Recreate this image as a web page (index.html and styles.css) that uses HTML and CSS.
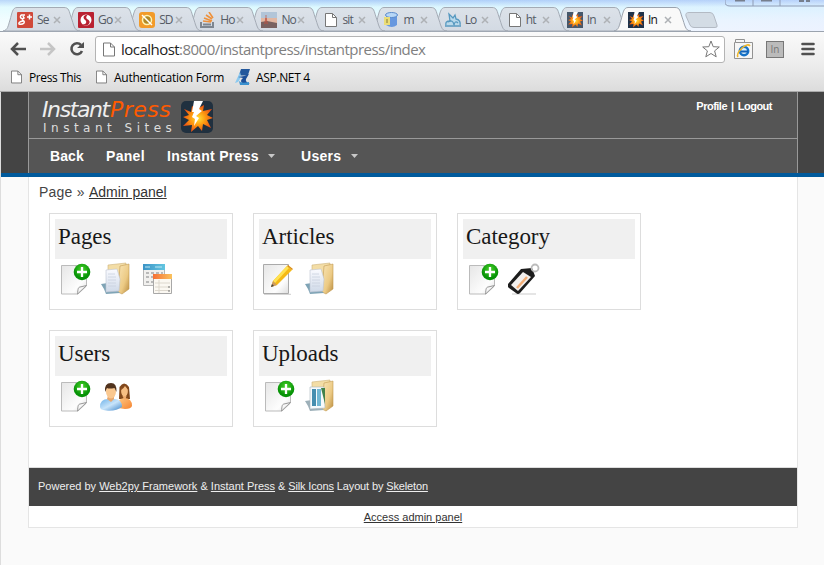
FILE: index.html
```html
<!DOCTYPE html>
<html lang="en">
<head>
<meta charset="utf-8">
<title>Instant Press</title>
<link rel="stylesheet" href="styles.css">
</head>
<body>
<svg class="defs" width="0" height="0" aria-hidden="true">
  <defs>
    <linearGradient id="gTab" x2="0" y2="1"><stop stop-color="#dce2e9"/><stop offset="1" stop-color="#d3dae3"/></linearGradient>
    <linearGradient id="gPaper" x2="1" y2="1"><stop stop-color="#e6e6e6"/><stop offset=".7" stop-color="#fdfdfd"/><stop offset="1" stop-color="#ddd"/></linearGradient>
    <radialGradient id="gGreen" cy=".35"><stop stop-color="#4cd52c"/><stop offset="1" stop-color="#079307"/></radialGradient>
    <linearGradient id="gFolder" x2="1" y2="1"><stop stop-color="#f9e6b8"/><stop offset=".6" stop-color="#ecca84"/><stop offset="1" stop-color="#b98b3e"/></linearGradient>
    <linearGradient id="gDoc" x2="0" y2="1"><stop stop-color="#fafbff"/><stop offset="1" stop-color="#cfd9e8"/></linearGradient>
    <radialGradient id="gFire"><stop stop-color="#ffe23a"/><stop offset=".5" stop-color="#fd9a10"/><stop offset="1" stop-color="#ed5312"/></radialGradient>
    <linearGradient id="gCalBlue" x2="1" y2="0"><stop stop-color="#3c93c6"/><stop offset="1" stop-color="#63c6e1"/></linearGradient>
    <linearGradient id="gCalOrange" x2="1" y2="0"><stop stop-color="#f66f35"/><stop offset="1" stop-color="#fac35e"/></linearGradient>
    <linearGradient id="gBlueShirt" x2="1" y2="1"><stop stop-color="#6eb2e9"/><stop offset=".5" stop-color="#c8e4fa"/><stop offset="1" stop-color="#3f86c9"/></linearGradient>
    <linearGradient id="gOrangeShirt" x2="1" y2="1"><stop stop-color="#ffcb86"/><stop offset="1" stop-color="#f58330"/></linearGradient>
    <symbol id="tab" viewBox="0 0 78 25"><path d="M0 24C5 23 5 19 7 13C9 6 9.500 .5 14 .5H61C66 .5 66 4 68 10C71 18 71 24 77 24Z"/></symbol>
    <symbol id="close" viewBox="0 0 8 8"><path d="M1 1L7 7M7 1L1 7" fill="none" stroke="#aeb1b5" stroke-width="1.500"/></symbol>
    <symbol id="file" viewBox="0 0 12 14"><path d="M.5 .5H7.500L11.500 4.500V13.500H.5Z" fill="#fff" stroke="#777"/><path d="M7.500 .5V4.500H11.500" fill="none" stroke="#777"/></symbol>
    <symbol id="blast" viewBox="0 0 32 32"><path d="M3 8L10 11L11 5L16 8L23 4L22 10L31 8L26 14L32 17L26 19L30 27L22 23L21 30L17 25L10 31L11 24L2 25L8 19L2 16L8 14Z" fill="url(#gFire)"/><path d="M13 0H22L18 8L21 10L15 15L18 17L13 25L14 18L11 16L13 11H11Z" fill="#fff"/></symbol>
    <symbol id="add" viewBox="0 0 32 33"><g transform="translate(1)"><path d="M1.500 3.500H26.500V24L18 32H1.500Z" fill="url(#gPaper)" stroke="#bbb"/><path d="M17.500 32C18 27 18 25.500 20 25L26.500 23.500Z" fill="#f7f7f7" stroke="#999"/><circle cx="22" cy="10" r="8.300" fill="url(#gGreen)"/><path d="M22 5V15M17 10H27" stroke="#fff" stroke-width="2.300"/></g></symbol>
    <symbol id="folder" viewBox="0 0 32 33"><path d="M8 3L26 1V26L8 29Z" fill="#f3dda6" stroke="#cdb27a" stroke-width=".6"/><path d="M20 4L29 2V27L22 32L18 30Z" fill="url(#gFolder)" stroke="#c29a52" stroke-width=".6"/></symbol>
    <symbol id="docs" viewBox="0 0 32 33"><use href="#folder"/><path d="M1 22L8 21L20 31L6 32L4 27Z" fill="#7fa4b6"/><path d="M6 8L17 7L20 17L19 29L6 30Z" fill="url(#gDoc)" stroke="#bec5d1" stroke-width=".6"/><path d="M8 12H15M8 15H16M8 18H16M8 21H16M8 24H16" stroke="#c9d0de" stroke-width=".8"/></symbol>
    <symbol id="photos" viewBox="0 0 32 33"><use href="#folder"/><path d="M1 22L8 21L20 31L6 32L4 27Z" fill="#9db0b9"/><path d="M6 8H20L21 29L6 30Z" fill="#f7fafc" stroke="#aab6bd" stroke-width=".6"/><path d="M8 10H12V27H8Z" fill="#468eaf"/><path d="M13 10H17V27H13Z" fill="#71b7d3"/><path d="M17 9H21V25Z" fill="#42824a"/></symbol>
    <symbol id="calendar" viewBox="0 0 32 33"><path d="M2.500 2.500H23.500V23.500H2.500Z" fill="#f1f0ee" stroke="#b6b6b6"/><path d="M2 2H24V8H2Z" fill="url(#gCalBlue)"/><path d="M4 5H9M14 5H21" stroke="#bde7f3"/><path d="M5 11H22M5 15H22M5 20H22" stroke="#b9b9b9" stroke-width="2" stroke-dasharray="3 2"/><path d="M12.500 12.500H30.500V31.500H12.500Z" fill="#fbf8f2" stroke="#a8a8a8"/><path d="M12 12H31V17H12Z" fill="url(#gCalOrange)"/><path d="M14 21H29M14 25H29M14 28.500H29M18 18V31" stroke="#ddd8ce"/><path d="M28 24V31" stroke="#777" stroke-dasharray="2 2"/></symbol>
    <symbol id="edit" viewBox="0 0 32 33"><path d="M1 32.300H28" stroke="#ccc"/><path d="M.5 2.500H25.500V31.500H.5Z" fill="url(#gPaper)" stroke="#aaa"/><path d="M8 25L10 19L24 4L29 8L14 23Z" fill="#f5b915"/><path d="M10 19L24 4L26 6L12 21Z" fill="#ffe252"/><path d="M8 25L10 19L14 23Z" fill="#ce9c60"/><path d="M8 25L9 22L11 24Z" fill="#444"/><path d="M24 4L25 3L30 7L29 8Z" fill="#dc8e12"/></symbol>
    <symbol id="tag" viewBox="0 0 32 33"><path d="M4 32H28" stroke="#ddd" stroke-width="1.500"/><path d="M0 22L13 7L24 6L27 14L12 31Q10 33 8 31L1 26Q-1 24 0 22Z" fill="#1c1c1c"/><path d="M3 23L15 10L23 15L10 29Z" fill="#f2efed"/><path d="M9 26L19 15" stroke="#f3ae77" stroke-width="2.500"/><circle cx="27" cy="6" r="3.500" fill="none" stroke="#bbb" stroke-width="1.800"/></symbol>
    <symbol id="people" viewBox="0 0 32 33"><path d="M19 20L19.500 8Q24 1 29 8L30 20Z" fill="#83491d"/><path d="M18 29Q16 20 24 19Q32 19 32 27Q31 30 25 30Z" fill="url(#gOrangeShirt)"/><ellipse cx="24.500" cy="12" rx="3.400" ry="5.500" fill="#f7bf84"/><path d="M21 11Q24 9 25 7Q27 10 29 11Q28 5 24.500 5Q21 6 21 11" fill="#83491d"/><path d="M22.500 17H26.500L25 22Z" fill="#f2ae70"/><path d="M0 28Q0 20 8 20H14Q22 20 22 28Q16 32.500 6 31.500Q0 31 0 28Z" fill="url(#gBlueShirt)"/><path d="M8 17H14V20L11 23L7 20Z" fill="#e9a86e"/><ellipse cx="11" cy="12.500" rx="5" ry="7" fill="#fac890"/><path d="M5 13Q4 4 11 4Q17 4 16.500 13L14.500 9Q9 10 7 9Z" fill="#51331d"/></symbol>
  </defs>
</svg>

<div class="browser">
  <div class="tabstrip">
    <div class="tab"><svg class="shape"><use href="#tab"/></svg><svg class="fav" viewBox="0 0 16 16"><rect width="16" height="16" rx="1" fill="#d0493a"/><path d="M8 3H4.500A2 2 0 1 0 7 6L6 4M5 8Q8 9 7 11Q5 13 2 12Q1 10 6 9M10 5H15M12.500 2.500V7.500" fill="none" stroke="#fff" stroke-width="1.500"/></svg><span class="label">Se</span><svg class="x"><use href="#close"/></svg></div>
    <div class="tab"><svg class="shape"><use href="#tab"/></svg><svg class="fav" viewBox="0 0 16 16"><rect width="16" height="16" rx="1" fill="#b92131"/><circle cx="8" cy="8" r="5.500" fill="#fff"/><path d="M10 2.500Q4 3 6 7Q9 9 8 11Q7 13 4 12Q8 15 11 12Q13 9 9 7Q7 5 10 2.500" fill="#b92131"/></svg><span class="label">Go</span><svg class="x"><use href="#close"/></svg></div>
    <div class="tab"><svg class="shape"><use href="#tab"/></svg><svg class="fav" viewBox="0 0 16 16"><rect width="16" height="16" rx="3" fill="#f29b2a"/><circle cx="8" cy="8" r="4.500" fill="#b18a27" stroke="#fff5b5" stroke-width="1.500"/><path d="M3 3L13 13" stroke="#fff" stroke-width="1.500"/></svg><span class="label">SD</span><svg class="x"><use href="#close"/></svg></div>
    <div class="tab"><svg class="shape"><use href="#tab"/></svg><svg class="fav" viewBox="0 0 16 16"><path d="M1 10V15H13V10M3 12.500H11" fill="none" stroke="#7e8690" stroke-width="2"/><path d="M3 9L11 10M4 6L12 9M6 3L12 7M9 0L13 6" stroke="#ee913b" stroke-width="1.600"/></svg><span class="label">Ho</span><svg class="x"><use href="#close"/></svg></div>
    <div class="tab"><svg class="shape"><use href="#tab"/></svg><svg class="fav" viewBox="0 0 16 16"><rect width="16" height="16" fill="#b2c5d8"/><path d="M0 6H16V11H0Z" fill="#e2b6a1"/><path d="M0 10L6 9L16 11V16H0Z" fill="#796160"/><path d="M5 3V12M3.500 12L5 6L6.500 12" stroke="#be5140" stroke-width=".7" fill="none"/></svg><span class="label">No</span><svg class="x"><use href="#close"/></svg></div>
    <div class="tab"><svg class="shape"><use href="#tab"/></svg><svg class="fav" viewBox="-3 -1 16 16"><use href="#file" width="12" height="14"/></svg><span class="label">sit</span><svg class="x"><use href="#close"/></svg></div>
    <div class="tab"><svg class="shape"><use href="#tab"/></svg><svg class="fav" viewBox="0 0 16 16"><path d="M2 3V13Q8 17 13 13V3Z" fill="#6798df"/><ellipse cx="7.500" cy="3" rx="6" ry="2.500" fill="#b7d7f7" stroke="#5b8bcc"/><rect y="5" width="6" height="8" fill="#eadd78"/><path d="M3 7V11" stroke="#887a34"/></svg><span class="label">m</span><svg class="x"><use href="#close"/></svg></div>
    <div class="tab"><svg class="shape"><use href="#tab"/></svg><svg class="fav" viewBox="0 0 16 16"><path d="M1 13Q0 9 5 9L4 2L8 6L10 3L11 7Q16 8 15 13M3 10Q8 7 9 13Q10 8 13 11M0 14H16" fill="#b9d9eb" stroke="#5799c0" stroke-width="1.300"/></svg><span class="label">Lo</span><svg class="x"><use href="#close"/></svg></div>
    <div class="tab"><svg class="shape"><use href="#tab"/></svg><svg class="fav" viewBox="-3 -1 16 16"><use href="#file" width="12" height="14"/></svg><span class="label">ht</span><svg class="x"><use href="#close"/></svg></div>
    <div class="tab"><svg class="shape"><use href="#tab"/></svg><svg class="fav" viewBox="0 0 32 32"><rect width="32" height="32" fill="#46586b"/><use href="#blast" width="32" height="32"/></svg><span class="label">In</span><svg class="x"><use href="#close"/></svg></div>
    <div class="tab active"><svg class="shape"><use href="#tab"/></svg><svg class="fav" viewBox="0 0 32 32"><rect width="32" height="32" fill="#20334a"/><use href="#blast" width="32" height="32"/></svg><span class="label">In</span><svg class="x"><use href="#close"/></svg></div>
    <svg class="newtab" viewBox="0 0 34 17"><path d="M4 .5H25Q28 .5 29 4L32 13Q33 15.500 30 15.500H9Q6 15.500 5 13L1 4Q0 .5 4 .5Z" fill="#d3dce5" stroke="#b3bac4"/></svg>
    <svg class="winbuttons" viewBox="0 0 99 7"><path d="M0 0V2Q0 6 5 6H99M28 0V6M55 0V6" fill="none" stroke="#8f9cb5"/><path d="M10 .5H19V-2M36 .5H46V-2M74 1H79M81 1H85" stroke="#777f8d" stroke-width="2" fill="none"/></svg>
  </div>
  <div class="toolbar">
    <svg class="nav-icons" viewBox="0 0 90 20"><path d="M26 10H13M18 4L12 10L18 16" fill="none" stroke="#505050" stroke-width="2.500"/><path d="M40 10H53M48 4L54 10L48 16" fill="none" stroke="#c5c5c5" stroke-width="2.500"/><path d="M81 6A5.500 5.500 0 1 0 82 12" fill="none" stroke="#505050" stroke-width="2.600"/><path d="M84 3V9H77Z" fill="#505050"/></svg>
    <div class="omnibox">
      <svg class="page"><use href="#file"/></svg>
      <span class="url"><b>localhost</b>:8000/instantpress/instantpress/index</span>
      <svg class="star" viewBox="0 0 18 18"><path d="M9 1L11.200 6.700L17.300 7L12.600 10.900L14.200 16.800L9 13.500L3.800 16.800L5.400 10.900L.7 7L6.800 6.700Z" fill="#fff" stroke="#777" stroke-linejoin="round"/></svg>
    </div>
    <svg class="ie" viewBox="0 0 20 20"><path d="M1.500 3.500V.5H10.500V3.500M1.500 3.500H18.500V19.500H.5V3.500Z" fill="#f6f6f6" stroke="#929292"/><circle cx="10" cy="12" r="4.200" fill="#d9effb" stroke="#1672c7" stroke-width="2.500"/><path d="M7 12.500H14" stroke="#1261b7" stroke-width="2"/><path d="M4 18Q2 15 8 9Q14 4 16 7" fill="none" stroke="#f0b72a" stroke-width="1.500"/></svg>
    <span class="inbox">In</span>
    <svg class="menu" viewBox="0 0 14 14"><path d="M1.500 2H12.500M1.500 7H12.500M1.500 12H12.500" stroke="#505050" stroke-width="2.600" stroke-linecap="round"/></svg>
  </div>
  <div class="bookmarks">
    <svg class="page"><use href="#file"/></svg><span class="bm press">Press This</span>
    <svg class="page"><use href="#file"/></svg><span class="bm auth">Authentication Form</span>
    <svg class="asp" viewBox="0 0 16 16"><path d="M6 0H15L13 6Q9 7 4 6Z" fill="#24589c"/><path d="M0 14L5 3Q7 8 3 13Z" fill="#8ccaf0"/><path d="M3 8Q9 8 14 5L11 10Q10 13 15 15H8Q4 12 8 9Z" fill="#1d4f98"/><path d="M4 12Q6 15 14 13V16H5Z" fill="#3a91cf"/></svg><span class="bm aspnet">ASP.NET 4</span>
  </div>
</div>

<div class="viewport">
  <header class="site-header">
    <div class="header-inner">
      <div class="branding">
        <div class="logo"><div class="name"><span class="instant">Instant</span><span class="orange">Press</span></div><div class="slogan">Instant Sites</div></div>
        <svg class="logo-icon" viewBox="0 0 32 32"><rect width="32" height="32" rx="5" fill="#20303f"/><use href="#blast" width="32" height="32"/></svg>
        <div class="account"><a>Profile</a> | <a>Logout</a></div>
      </div>
      <nav class="mainnav"><a class="n1">Back</a><a class="n2">Panel</a><a class="n3">Instant Press</a><i class="caret"></i><a class="n4">Users</a><i class="caret"></i></nav>
    </div>
  </header>
  <div class="sheet">
    <main>
      <div class="crumbs"><span>Page » </span><a>Admin panel</a></div>
      <div class="cards">
        <section class="card"><h2>Pages</h2><div class="icons"><svg><use href="#add"/></svg><svg><use href="#docs"/></svg><svg><use href="#calendar"/></svg></div></section>
        <section class="card"><h2>Articles</h2><div class="icons"><svg><use href="#edit"/></svg><svg><use href="#docs"/></svg></div></section>
        <section class="card"><h2>Category</h2><div class="icons"><svg><use href="#add"/></svg><svg><use href="#tag"/></svg></div></section>
        <section class="card"><h2>Users</h2><div class="icons"><svg><use href="#add"/></svg><svg><use href="#people"/></svg></div></section>
        <section class="card"><h2>Uploads</h2><div class="icons"><svg><use href="#add"/></svg><svg><use href="#photos"/></svg></div></section>
      </div>
    </main>
    <footer>Powered by <a>Web2py Framework</a> &amp; <a>Instant Press</a> <span class="tight">&amp; <a>Silk Icons</a> Layout by <a>Skeleton</a></span></footer>
    <div class="access"><a>Access admin panel</a></div>
  </div>
</div>
</body>
</html>
```
FILE: styles.css
```css
* { box-sizing: border-box; }
body { margin: 0; width: 824px; height: 565px; overflow: hidden; background: #fafafa; font-family: "Liberation Sans", Arial, sans-serif; }
svg { display: block; flex: none; }
.defs { position: absolute; }

/* Browser frame */
.browser { height: 92px; font-family: "Open Sans", "Noto Sans", sans-serif; border-bottom: 1px solid #aaa; }
.tabstrip { position: relative; display: flex; height: 32px; padding-left: 3px; background: linear-gradient(90deg, rgba(255,255,255,.2), rgba(255,255,255,0) 30%, rgba(220,220,255,.3)), linear-gradient(#a9cdf8, #dcfaff 7px, #eefcff 20px, #f4fcff); border-bottom: 1px solid #9ba3ae; }
.tab { position: relative; display: flex; align-items: center; width: 61.1px; height: 24px; margin-top: 8px; padding-left: 14px; flex: none; font-size: 12px; color: #555b65; }
.tab .shape { position: absolute; left: 0; top: -1px; width: 78px; height: 25px; fill: url(#gTab); stroke: #a4abb5; }
.tab .fav, .tab .label, .tab .x { position: relative; }
.fav { width: 16px; height: 16px; }
.label { width: 15px; margin-left: 4px; white-space: nowrap; line-height: 20px; letter-spacing: -.9px; }
.tab .x { width: 8px; height: 8px; margin-left: 1px; }
.tab:nth-child(1) { z-index: 10; }
.tab:nth-child(2) { z-index: 9; }
.tab:nth-child(3) { z-index: 8; }
.tab:nth-child(4) { z-index: 7; }
.tab:nth-child(5) { z-index: 6; }
.tab:nth-child(6) { z-index: 5; }
.tab:nth-child(7) { z-index: 4; }
.tab:nth-child(8) { z-index: 3; }
.tab:nth-child(9) { z-index: 2; }
.tab:nth-child(10) { z-index: 1; }
.tab.active { z-index: 11; color: #111; }
.tab.active .shape { fill: #f9f9f9; stroke: #9ba3ae; }
.newtab { width: 34px; height: 17px; margin: 12px 0 0 10px; }
.winbuttons { position: absolute; right: 0; top: 0; width: 99px; height: 7px; }
.toolbar { display: flex; align-items: center; height: 34px; background: linear-gradient(#fafafa, #ececec); }
.nav-icons { width: 90px; height: 20px; }
.omnibox { display: flex; align-items: center; width: 630px; height: 27px; margin-left: 5px; padding: 0 4px 0 7px; background: #fff; border: 1px solid #b4b4b4; border-radius: 3px; }
.omnibox .page { width: 12px; height: 15px; }
.url { flex: 1; margin-left: 6px; font-size: 15px; letter-spacing: -.53px; color: #808080; white-space: nowrap; line-height: 24px; }
.url b { color: #222; font-weight: 400; }
.star { width: 18px; height: 18px; }
.ie { width: 20px; height: 20px; margin-left: 9px; }
.inbox { width: 18px; height: 17px; margin-left: 12px; border: 1px solid #777; background: #bbb; color: #777; font-size: 10px; line-height: 15px; text-align: center; }
.menu { width: 14px; height: 14px; margin-left: 17px; }
.bookmarks { display: flex; align-items: center; height: 25px; padding: 0 0 3px 11px; background: linear-gradient(#ececec, #dcdcdc); font-size: 12px; color: #000; }
.bookmarks .page { width: 11px; height: 14px; }
.bm { margin-left: 7px; white-space: nowrap; }
.press { width: 67px; letter-spacing: -.4px; }
.auth { width: 121px; letter-spacing: -.25px; }
.asp { width: 16px; height: 16px; }
.aspnet { margin-left: 5px; letter-spacing: -.35px; }

/* Page */
.viewport { height: 473px; border-left: 1px solid #ddd; }
.site-header { height: 85px; padding: 0 26px 0 27px; background: #444; border-bottom: 4px solid #005a9c; }
.header-inner { height: 81px; background: #555; border: solid #999; border-width: 0 1px; color: #fff; }
.branding { display: flex; height: 47px; padding: 0 25px 0 13px; border-bottom: 1px solid #999; }
.logo { width: 139px; font-family: "DejaVu Sans", sans-serif; }
.name { display: flex; height: 29px; padding-top: 4px; font-size: 22px; line-height: 28px; font-style: italic; white-space: nowrap; color: #eee; }
.instant { width: 68px; letter-spacing: -1.4px; }
.orange { color: #ff5a00; letter-spacing: .5px; }
.slogan { padding-left: 1px; font-size: 12px; letter-spacing: 4.5px; line-height: 14px; color: #ddd; white-space: nowrap; }
.logo-icon { width: 32px; height: 32px; margin-top: 9px; }
.account { margin: 8px 0 0 auto; font-size: 11px; line-height: 13px; font-weight: 700; word-spacing: 1.5px; letter-spacing: -.5px; }
.mainnav { display: flex; align-items: center; height: 34px; padding-left: 21px; font-size: 14px; font-weight: 700; white-space: nowrap; letter-spacing: .3px; }
.n1 { width: 56px; letter-spacing: .1px; }
.n2 { width: 61px; }
.n3 { width: 101px; }
.n4 { width: 50px; margin-left: 26px; }
.caret { width: 7px; height: 4px; background: #c8c8c8; clip-path: polygon(0 0, 100% 0, 50% 100%); }
.sheet { width: 770px; margin-left: 27px; background: #fff; border: 1px solid #e5e5e5; border-top: 0; }
main { height: 291px; border-bottom: 1px solid #ddd; }
.crumbs { height: 36px; padding: 7px 0 0 10px; font-size: 14px; line-height: 16px; color: #444; }
.crumbs span { letter-spacing: .23px; }
a { color: inherit; }
.crumbs a, footer a, .access a { text-decoration: underline; }
.crumbs a { color: #333; }
.cards { display: grid; grid-template-columns: repeat(3, 184px); grid-auto-rows: 97px; gap: 20px; padding-left: 20px; }
.card { border: 1px solid #ddd; padding: 5px; }
.card h2 { height: 40px; margin: 0; padding-left: 3px; background: #f0f0f0; color: #181818; font: 400 23px/36px Georgia, "Liberation Serif", serif; letter-spacing: -.05px; }
.icons { display: flex; gap: 9px; padding: 3px 0 0 4px; }
.icons svg { width: 32px; height: 33px; }
footer { height: 38px; padding-left: 9px; background: #444; color: #eee; font-size: 11px; line-height: 37px; }
footer .tight { letter-spacing: -.14px; }
.access { height: 21px; font-size: 11px; line-height: 22px; text-align: center; color: #333; }
```
